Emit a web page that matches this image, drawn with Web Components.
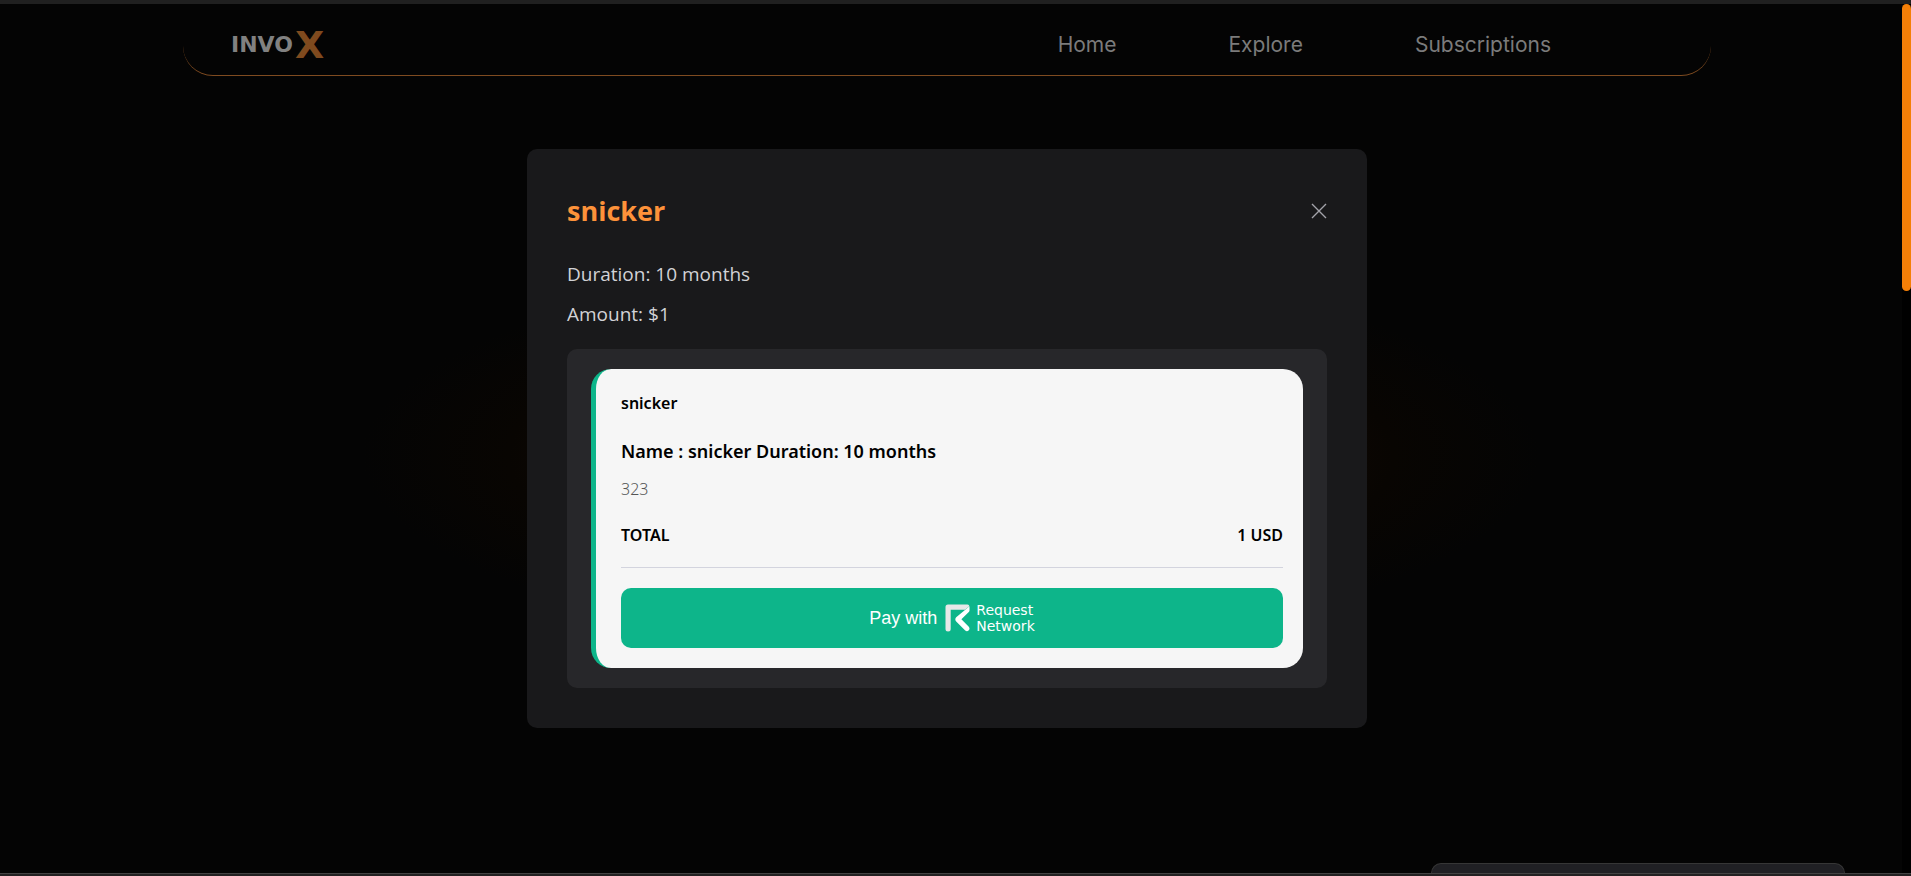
<!DOCTYPE html>
<html lang="en">
<head>
<meta charset="utf-8">
<title>InvoX</title>
<style>
  html, body { margin: 0; height: 100%; background: #040404; }
  body { overflow: hidden; font-family: "Open Sans", "Noto Sans", sans-serif; }
</style>
</head>
<body>
<invox-app>
  <invox-header slot="header"></invox-header>
  <plan-dialog plan="snicker">
    <p>Duration: 10 months</p>
    <p>Amount: $1</p>
    <payment-card slot="payment" seller="snicker" product="Name : snicker Duration: 10 months" note="323" total="1 USD"></payment-card>
  </plan-dialog>
</invox-app>

<script>
class ShadowElement extends HTMLElement {
  connectedCallback() {
    if (this.shadowRoot) return;
    this.attachShadow({ mode: 'open' }).innerHTML = this.render();
  }
  attr(name) { return this.getAttribute(name) || ''; }
}

customElements.define('invox-app', class extends ShadowElement {
  render() {
    return `
    <style>
      :host { display: grid; grid-template-rows: 4px 1fr 3px; height: 100vh; }
      .top { background: #202020; }
      .bottom { background: #232122; border-top: 1px solid #434343; box-sizing: border-box; }
      .view { display: flex; min-height: 0; }
      .page {
        flex: 1; display: flex; flex-direction: column; position: relative; overflow: hidden;
        padding-right: 8px;
        background: radial-gradient(ellipse 31% 22% at 50% 52%, #1c0e04 0%, #120903 50%, #080502 75%, #040404 100%), #040404;
      }
      main { flex: 1; display: flex; align-items: flex-start; justify-content: center; padding-top: 73px; }
      .track { width: 9px; background: #000; }
      .thumb { height: 33%; border-radius: 5px; background: #f57f07; }
      .toast {
        position: absolute; right: 57px; bottom: 0; width: 414px; height: 10px; box-sizing: border-box;
        border: 1px solid #363636; border-bottom: 0; border-radius: 10px 10px 0 0; background: #202024;
      }
    </style>
    <div class="top"></div>
    <div class="view">
      <div class="page">
        <slot name="header"></slot>
        <main><slot></slot></main>
        <div class="toast"></div>
      </div>
      <div class="track"><div class="thumb"></div></div>
    </div>
    <div class="bottom"></div>`;
  }
});

customElements.define('invox-header', class extends ShadowElement {
  render() {
    return `
    <style>
      :host { display: block; margin: 0 183px; }
      header {
        display: flex; align-items: center; justify-content: space-between;
        height: 72px; box-sizing: border-box; padding: 10px 160px 0 48px;
        border-bottom: 1px solid #7f4b20; border-radius: 0 0 30px 30px;
      }
      a { text-decoration: none; }
      .logo { display: flex; align-items: center; gap: 2px; font-family: "DejaVu Sans", sans-serif; font-weight: 700; line-height: 30px; }
      .word { font-size: 22px; color: #818181; }
      .mark { font-size: 38px; color: #7f4a1e; }
      nav { display: flex; gap: 112px; font: 400 21px/28px Inter, sans-serif; }
      nav a { color: #7b7b7b; }
    </style>
    <header>
      <a class="logo" href="#" aria-label="InvoX"><span class="word">INVO</span><span class="mark">X</span></a>
      <nav><a href="#home">Home</a><a href="#explore">Explore</a><a href="#subscriptions">Subscriptions</a></nav>
    </header>`;
  }
});

customElements.define('plan-dialog', class extends ShadowElement {
  render() {
    return `
    <style>
      :host { display: block; width: 840px; max-width: 100%; box-sizing: border-box; padding: 40px; border-radius: 10px; background: #19191b; }
      .head { display: flex; align-items: center; justify-content: space-between; margin-bottom: 26px; }
      h2 { margin: 0; font-size: 27px; line-height: 44px; font-weight: 700; color: #fd923a; }
      button { display: flex; padding: 0; border: 0; background: none; color: #a3a3aa; }
      .facts { display: flex; flex-direction: column; gap: 10px; margin-bottom: 20px; }
      ::slotted(p) { margin: 0; font-size: 19px; line-height: 30px; color: #d2d2d6; }
      .box { padding: 20px 24px; border-radius: 10px; background: #27272a; }
    </style>
    <section role="dialog" aria-labelledby="title">
      <div class="head">
        <h2 id="title">${this.attr('plan')}</h2>
        <button type="button" aria-label="Close">
          <svg width="16" height="16" viewBox="0 0 16 16" fill="none" stroke="currentColor" stroke-width="1.4"><path d="M1 1 15 15M15 1 1 15"/></svg>
        </button>
      </div>
      <div class="facts"><slot></slot></div>
      <div class="box"><slot name="payment"></slot></div>
    </section>`;
  }
});

customElements.define('payment-card', class extends ShadowElement {
  render() {
    return `
    <style>
      :host {
        display: block; padding: 20px 20px 20px 25px; border-left: 5px solid #0db58a; border-radius: 20px;
        background: #f6f6f6; color: #000; font: 600 16px/28px "Noto Sans", sans-serif;
      }
      p, h3 { margin: 0; font-size: 16px; font-weight: 600; }
      h3 { margin: 20px 0 10px; font-size: 18px; }
      .note { font-weight: 300; color: #555; }
      .total { display: flex; justify-content: space-between; margin: 18px 0 20px; padding-bottom: 18px; border-bottom: 1px solid #d3d4de; }
    </style>
    <p>${this.attr('seller')}</p>
    <h3>${this.attr('product')}</h3>
    <p class="note">${this.attr('note')}</p>
    <div class="total"><span>TOTAL</span><span>${this.attr('total')}</span></div>
    <pay-button></pay-button>`;
  }
});

customElements.define('pay-button', class extends ShadowElement {
  render() {
    return `
    <style>
      :host { display: block; }
      button {
        display: flex; align-items: center; justify-content: center; width: 100%; height: 60px; padding: 0;
        border: 0; border-radius: 10px; background: #0db58a; color: #fff;
        font: 400 18px/24px "Liberation Sans", Arial, sans-serif;
      }
      svg { margin: 0 6px 0 8px; }
      .brand { font: 400 14px/16px "DejaVu Sans", sans-serif; text-align: left; }
    </style>
    <button type="button">
      <span>Pay with</span>
      <svg width="25" height="28" viewBox="0 0 25 28" aria-hidden="true">
        <path d="M3 .5H22.500Q24.300.5 24.300 2.300L20 5.700H5.700V25Q5.700 27.500 3.100 27.500T.5 25V3Q.5.5 3 .5Z" fill="#e7e8e8"/>
        <path d="M24.500 2.200V6.500Q24.500 7.400 23.800 8.100L16.400 15.300 23.800 22.700Q25.200 24.500 23.800 26.300 22 28 20.200 26.500L11.200 17.500Q9.400 15.400 11.200 13.300Z" fill="#fff"/>
      </svg>
      <span class="brand">Request<br>Network</span>
    </button>`;
  }
});
</script>
</body>
</html>
